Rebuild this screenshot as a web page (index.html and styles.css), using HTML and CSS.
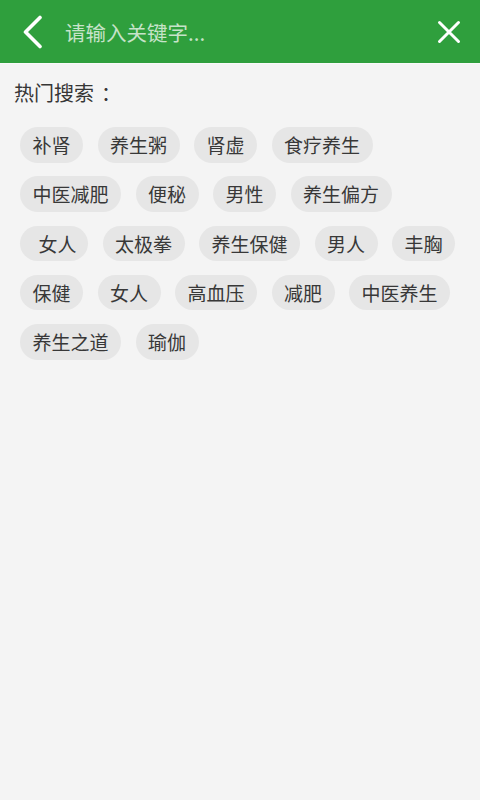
FILE: index.html
```html
<!DOCTYPE html>
<html lang="zh-CN">
<head>
<meta charset="utf-8">
<title>搜索</title>
<link rel="stylesheet" href="styles.css">
</head>
<body>
<div class="app">
  <header class="topbar">
    <svg class="back" width="24" height="34" viewBox="0 0 24 34"><path d="M19 2.5 L4.5 17 L19 31.5" fill="none" stroke="#fff" stroke-width="3.6" stroke-linecap="round" stroke-linejoin="round"/></svg>
    <div class="search-input">请输入关键字...</div>
    <svg class="close" width="24" height="24" viewBox="0 0 24 24"><path d="M2.5 2.5 L21.5 21.5 M21.5 2.5 L2.5 21.5" fill="none" stroke="#fff" stroke-width="3" stroke-linecap="round"/></svg>
  </header>
  <main class="content">
    <div class="section-title">热门搜索<span class="colon">：</span></div>
    <div class="tags">
      <span class="tag">补肾</span>
      <span class="tag">养生粥</span>
      <span class="tag">肾虚</span>
      <span class="tag">食疗养生</span>
      <span class="tag">中医减肥</span>
      <span class="tag">便秘</span>
      <span class="tag">男性</span>
      <span class="tag">养生偏方</span>
      <span class="tag tag-wide">女人</span>
      <span class="tag">太极拳</span>
      <span class="tag">养生保健</span>
      <span class="tag">男人</span>
      <span class="tag">丰胸</span>
      <span class="tag">保健</span>
      <span class="tag">女人</span>
      <span class="tag">高血压</span>
      <span class="tag">减肥</span>
      <span class="tag">中医养生</span>
      <span class="tag">养生之道</span>
      <span class="tag">瑜伽</span>
    </div>
  </main>
</div>
</body>
</html>
```

FILE: styles.css
```css
* { box-sizing: border-box; }
html, body {
  margin: 0;
  padding: 0;
  height: 100%;
}
body {
  background: #f4f4f4;
  font-family: "Noto Sans CJK SC", "Noto Sans", sans-serif;
}
.app {
  min-height: 800px;
  display: flex;
  flex-direction: column;
}
.topbar {
  height: 63px;
  background: #2f9f3d;
  display: flex;
  align-items: center;
  border-bottom: 1px solid #f9f9f9;
  box-sizing: content-box;
}
.back {
  margin-left: 21px;
  flex: none;
}
.search-input {
  flex: 1;
  margin-left: 20px;
  font-size: 20.5px;
  line-height: 28px;
  color: #c6e3c9;
  letter-spacing: 0;
}
.close {
  flex: none;
  margin-right: 19.5px;
}
.content {
  padding: 17px 20px 0 14px;
}
.section-title {
  font-size: 20px;
  line-height: 24px;
  color: #363636;
}
.colon {
  padding-left: 7px;
}
.tags {
  margin-top: 22px;
  padding-left: 6px;
  display: flex;
  flex-wrap: wrap;
  column-gap: 14.5px;
  row-gap: 13.75px;
}
.tag {
  height: 35.5px;
  line-height: 35.5px;
  padding: 0 12.5px;
  border-radius: 18px;
  background: #e6e6e6;
  color: #383838;
  font-size: 19px;
  white-space: nowrap;
}
.tag-wide {
  padding-left: 18.5px;
  padding-right: 11.5px;
}
```
